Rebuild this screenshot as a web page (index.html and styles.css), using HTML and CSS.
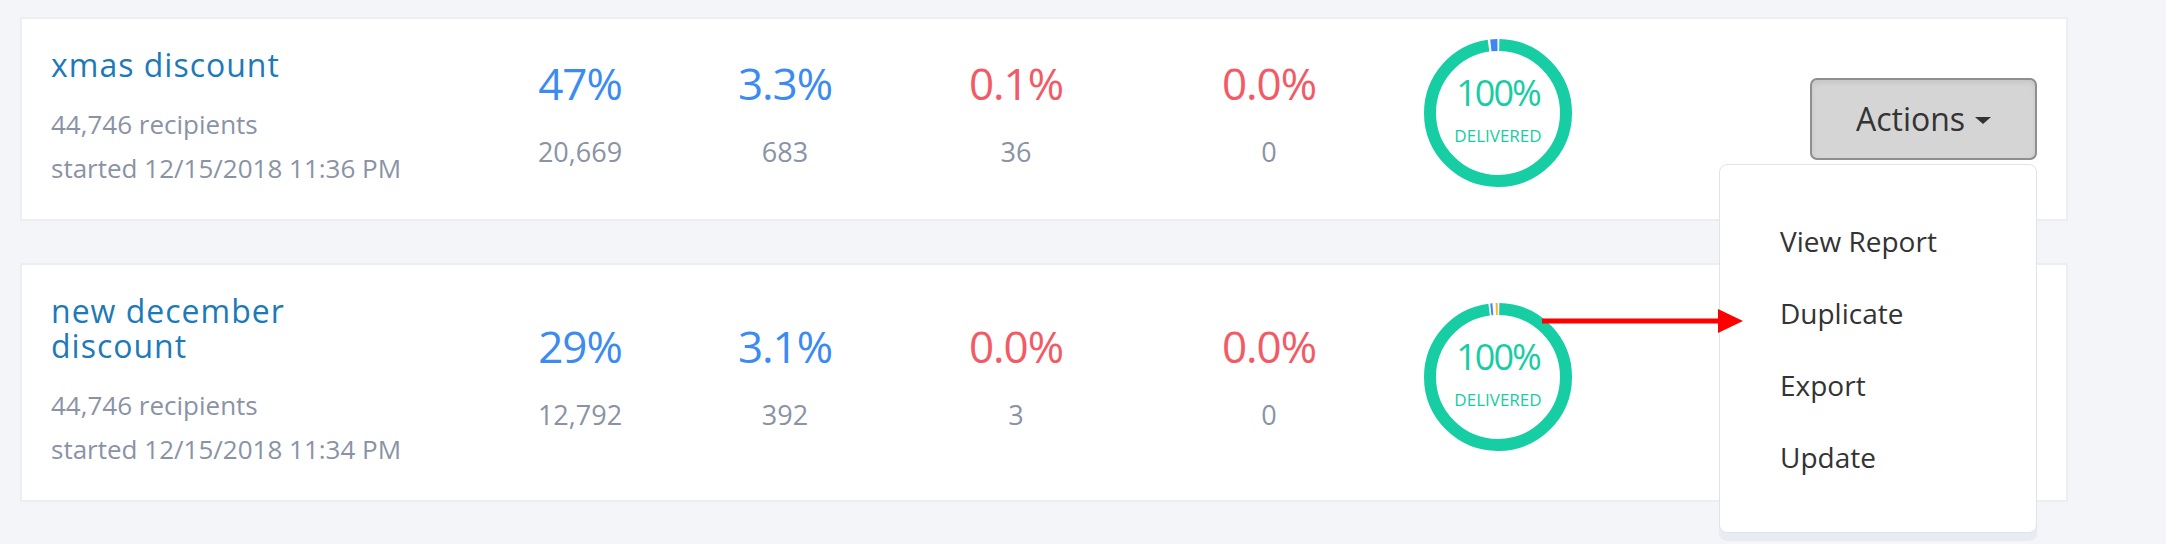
FILE: index.html
```
<!DOCTYPE html>
<html lang="en">
<head>
  <meta charset="UTF-8">
  <title>Campaigns</title>
  <meta name="viewport" content="width=device-width, initial-scale=1.0">
  <link rel="stylesheet" href="styles.css">
</head>
<body>
  <div class="campaigns">

    <div class="campaign">
      <div class="campaign-info">
        <a class="campaign-name" href="#">xmas discount</a>
        <div class="campaign-meta first">44,746 recipients</div>
        <div class="campaign-meta">started 12/15/2018 11:36 PM</div>
      </div>
      <div class="stat"><div class="stat-rate good">47%</div><div class="stat-count">20,669</div></div>
      <div class="stat"><div class="stat-rate good">3.3%</div><div class="stat-count">683</div></div>
      <div class="stat"><div class="stat-rate bad">0.1%</div><div class="stat-count">36</div></div>
      <div class="stat"><div class="stat-rate bad">0.0%</div><div class="stat-count">0</div></div>
      <div class="donut">
        <svg width="148" height="148" viewBox="0 0 148 148">
          <g transform="rotate(-90 74 74)" fill="none" stroke-width="12">
            <circle cx="74" cy="74" r="68" stroke="#17cda4" stroke-dasharray="415.7 1000" stroke-dashoffset="-1.3"/>
            <circle cx="74" cy="74" r="68" stroke="#3b86f2" stroke-dasharray="6.7 1000" stroke-dashoffset="-419.3"/>
          </g>
        </svg>
        <div class="donut-label">
          <div class="donut-value">100%</div>
          <div class="donut-caption">DELIVERED</div>
        </div>
      </div>
      <div class="actions">
        <button class="btn-actions">Actions <span class="caret"></span></button>
        <ul class="dropdown">
          <li>View Report</li>
          <li>Duplicate</li>
          <li>Export</li>
          <li>Update</li>
        </ul>
      </div>
    </div>

    <div class="campaign">
      <div class="campaign-info">
        <a class="campaign-name" href="#">new december discount</a>
        <div class="campaign-meta first">44,746 recipients</div>
        <div class="campaign-meta">started 12/15/2018 11:34 PM</div>
      </div>
      <div class="stat"><div class="stat-rate good">29%</div><div class="stat-count">12,792</div></div>
      <div class="stat"><div class="stat-rate good">3.1%</div><div class="stat-count">392</div></div>
      <div class="stat"><div class="stat-rate bad">0.0%</div><div class="stat-count">3</div></div>
      <div class="stat"><div class="stat-rate bad">0.0%</div><div class="stat-count">0</div></div>
      <div class="donut">
        <svg width="148" height="148" viewBox="0 0 148 148">
          <g transform="rotate(-90 74 74)" fill="none" stroke-width="12">
            <circle cx="74" cy="74" r="68" stroke="#17cda4" stroke-dasharray="416.3 1000" stroke-dashoffset="-1.3"/>
            <circle cx="74" cy="74" r="68" stroke="#3b86f2" stroke-dasharray="2 1000" stroke-dashoffset="-419.3"/>
            <circle cx="74" cy="74" r="68" stroke="#f5b731" stroke-dasharray="2 1000" stroke-dashoffset="-424.3"/>
          </g>
        </svg>
        <div class="donut-label">
          <div class="donut-value">100%</div>
          <div class="donut-caption">DELIVERED</div>
        </div>
        <svg class="pointer" width="201" height="24" viewBox="0 0 201 24">
          <rect x="0" y="9.5" width="178" height="5" fill="#ff0000"/>
          <polygon points="176,0 201,12 176,24" fill="#ff0000"/>
        </svg>
      </div>
      <div class="actions"></div>
    </div>

    <div class="campaign campaign-empty"></div>

  </div>
</body>
</html>
```

FILE: styles.css
```
body {
  margin: 0;
  background: #f4f5f8;
  font-family: "Open Sans", "Liberation Sans", sans-serif;
  height: 544px;
  overflow: hidden;
}

.campaigns {
  padding: 17px 98px 0 20px;
}

.campaign {
  display: grid;
  grid-template-columns: 440px 178px 232px 230px 276px 182px 1fr;
  align-items: center;
  background: #fff;
  border: 2px solid #eceef2;
  padding: 28px 29px 29px;
  margin-bottom: 42px;
}

.campaign-empty {
  height: 180px;
}

.campaign-name {
  display: block;
  max-width: 270px;
  font-size: 32px;
  line-height: 35px;
  letter-spacing: 1px;
  color: #1d7ab9;
  text-decoration: none;
}

.campaign-meta {
  font-size: 26px;
  line-height: 44px;
  color: #8a93a6;
  white-space: nowrap;
}

.campaign-meta.first {
  margin-top: 20px;
}

.stat {
  text-align: center;
  padding-bottom: 10px;
}

.stat-rate {
  font-size: 44px;
  line-height: 50px;
  letter-spacing: -1px;
}

.stat-rate.good { color: #3b8bf3; }
.stat-rate.bad { color: #f25b66; }

.stat-count {
  margin-top: 26px;
  font-size: 27px;
  line-height: 36px;
  color: #8a93a6;
}

.donut {
  position: relative;
  width: 148px;
  height: 148px;
  justify-self: center;
  margin-top: -11px;
}

.donut svg {
  display: block;
}

.donut-label {
  position: absolute;
  inset: 0;
  display: flex;
  flex-direction: column;
  align-items: center;
  justify-content: center;
  padding-bottom: 6px;
  color: #17cda4;
}

.donut-value {
  font-size: 36px;
  line-height: 40px;
  letter-spacing: -2px;
}

.donut-caption {
  margin-top: 12px;
  font-size: 17px;
  line-height: 22px;
}

.pointer {
  position: absolute;
  left: 118px;
  top: 6px;
  z-index: 20;
  overflow: visible;
}

.actions {
  position: relative;
  justify-self: end;
}

.btn-actions {
  display: flex;
  align-items: center;
  justify-content: center;
  gap: 10px;
  width: 227px;
  height: 82px;
  padding: 0;
  background: #d5d5d5;
  border: 2px solid #8e8e8e;
  border-radius: 7px;
  box-shadow: inset 0 3px 5px rgba(0, 0, 0, 0.07);
  font-family: inherit;
  font-size: 32px;
  color: #333;
}

.caret {
  width: 0;
  height: 0;
  margin-top: 4px;
  border-left: 8px solid transparent;
  border-right: 8px solid transparent;
  border-top: 7px solid #333;
}

.dropdown {
  position: absolute;
  top: calc(100% + 4px);
  right: 0;
  z-index: 10;
  box-sizing: border-box;
  width: 318px;
  margin: 0;
  padding: 40px 0 39px 60px;
  list-style: none;
  background: #fff;
  border: 1px solid #dfe3ea;
  border-radius: 8px;
  box-shadow: 0 8px 0 #e8ebf1;
}

.dropdown li {
  font-size: 28px;
  line-height: 72px;
  color: #333;
}
```
